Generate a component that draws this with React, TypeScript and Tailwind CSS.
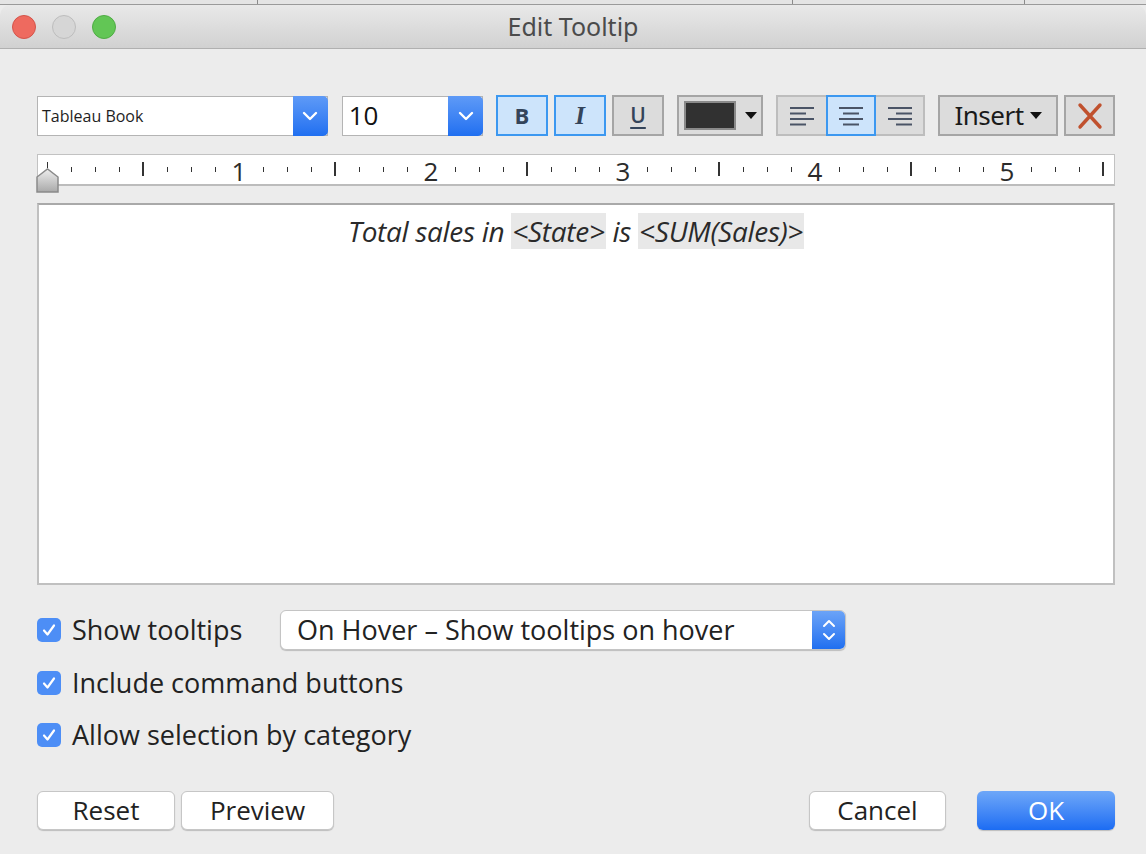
import React from "react";

const UI = { fontFamily: '"Open Sans", "Noto Sans", sans-serif' };

function Chevron() {
  return (
    <svg width="16" height="10" viewBox="0 0 16 10">
      <path d="M2 2 L8 8 L14 2" fill="none" stroke="white" strokeWidth="2.4" strokeLinecap="round" strokeLinejoin="round" />
    </svg>
  );
}

function Tri() {
  return (
    <svg width="12" height="8" viewBox="0 0 12 8">
      <path d="M0 0 H12 L6 7 Z" fill="#111" />
    </svg>
  );
}

function AlignIcon({ mode }: { mode: "l" | "c" | "r" }) {
  const rows = [24, 16, 24, 16];
  return (
    <svg width="24" height="20" viewBox="0 0 24 20">
      {rows.map((w, i) => {
        const x = mode === "l" ? 0 : mode === "r" ? 24 - w : (24 - w) / 2;
        return <rect key={i} x={x} y={1 + i * 5.5} width={w} height="2" fill="#4a5466" />;
      })}
    </svg>
  );
}

function Check() {
  return (
    <div className="w-[24px] h-[24px] rounded-[5px] bg-[#4d8ef6] flex items-center justify-center flex-none">
      <svg width="16" height="16" viewBox="0 0 16 16">
        <path d="M3 8.5 L6.5 12.5 L13 3.5" fill="none" stroke="white" strokeWidth="2.2" strokeLinecap="round" strokeLinejoin="round" />
      </svg>
    </div>
  );
}

function Ruler() {
  const cells = Array.from({ length: 45 }, (_, k) => k);
  return (
    <div className="relative h-[32px] bg-white border border-[#c2c2c2] border-b-2 border-b-[#bcbcbc] flex pl-[9px] mt-[18px]">
      {cells.map((k) => (
        <div key={k} className="w-[24px] flex-none h-full">
          <div className="w-0 h-full flex justify-center">
            {k % 8 === 0 && k > 0 ? (
              <span className="flex-none text-[26px] leading-none text-[#2b2b2b] mt-[3px]" style={UI}>
                {k / 8}
              </span>
            ) : k % 8 === 4 ? (
              <div className="w-[1.5px] h-[14px] bg-[#333] flex-none mt-[7px]" />
            ) : k === 0 ? (
              <div className="w-px h-[6px] bg-[#333] flex-none mt-[7px]" />
            ) : (
              <div className="w-px h-[5px] bg-[#333] flex-none mt-[12px]" />
            )}
          </div>
        </div>
      ))}
      <svg className="absolute left-[-2px] top-[13px]" width="23" height="25" viewBox="0 0 23 25">
        <defs>
          <linearGradient id="mk" x1="0" y1="0" x2="0" y2="1">
            <stop offset="0" stopColor="#eeeeee" />
            <stop offset="1" stopColor="#a9a9a9" />
          </linearGradient>
        </defs>
        <path d="M1 24 V9 L11.5 1 L22 9 V24 Z" fill="url(#mk)" stroke="#8a8a8a" strokeWidth="1.5" />
      </svg>
    </div>
  );
}

const toolBtn = "h-[41px] flex items-center justify-center border-2 flex-none";
const selBtn = "bg-[#cde4fb] border-[#3c98f0]";
const offBtn = "bg-[#dcdcdc] border-[#a5a5a5]";
const pushBtn =
  "h-[39px] bg-white rounded-[6px] border border-[#c6c6c6] shadow-[0_1px_1px_rgba(0,0,0,0.2)] text-[26px] text-[#222] flex items-center justify-center";

export default function App() {
  return (
    <div className="w-[1146px] h-[854px] bg-[#ececec] flex flex-col overflow-hidden" style={UI}>
      {/* strip of window behind */}
      <div className="h-[5px] bg-[#e4e4e4] border-b border-b-[#9a9a9a] flex flex-none">
        <div className="w-[258px] border-r border-r-[#8a8a8a]" />
        <div className="w-[535px] border-r border-r-[#8a8a8a]" />
        <div className="w-[232px] border-r border-r-[#8a8a8a]" />
      </div>
      {/* title bar */}
      <div className="h-[44px] flex-none rounded-tl-[10px] rounded-tr-[10px] bg-gradient-to-b from-[#e9e9e9] to-[#d1d1d1] border-b border-b-[#b0b0b0] flex items-center relative">
        <div className="flex gap-[16px] pl-[12px] items-center">
          <div className="w-[24px] h-[24px] rounded-full bg-[#ee6a5f] border border-[#d4544a]" />
          <div className="w-[24px] h-[24px] rounded-full bg-[#d6d6d6] border border-[#bdbdbd]" />
          <div className="w-[24px] h-[24px] rounded-full bg-[#62c655] border border-[#4fac44]" />
        </div>
        <div className="absolute inset-0 flex items-center justify-center text-[25px] text-[#4b4b4b]" style={{ fontFamily: '"Noto Sans", sans-serif' }}>
          Edit Tooltip
        </div>
      </div>

      <div className="flex flex-col pl-[37px] pr-[31px] flex-1">
        {/* toolbar */}
        <div className="flex items-center mt-[46px] h-[41px]">
          <div className="w-[292px] h-[40px] bg-white border border-[#b4b4b4] flex items-center">
            <span className="flex-1 pl-[4px] text-[16px] text-[#1e1e1e]">Tableau Book</span>
            <div className="w-[35px] h-[40px] -mr-px rounded-r-[5px] bg-gradient-to-b from-[#5e9af7] to-[#1f6ff0] flex items-center justify-center">
              <Chevron />
            </div>
          </div>
          <div className="ml-[14px] w-[142px] h-[40px] bg-white border border-[#b4b4b4] flex items-center">
            <span className="flex-1 pl-[6px] text-[26px] text-[#111]">10</span>
            <div className="w-[35px] h-[40px] -mr-px rounded-r-[5px] bg-gradient-to-b from-[#5e9af7] to-[#1f6ff0] flex items-center justify-center">
              <Chevron />
            </div>
          </div>
          <div className={`${toolBtn} ${selBtn} ml-[13px] w-[52px]`}>
            <span className="text-[22px] font-bold text-[#34445a]">B</span>
          </div>
          <div className={`${toolBtn} ${selBtn} ml-[6px] w-[52px]`}>
            <span className="text-[25px] italic font-bold text-[#34445a]" style={{ fontFamily: '"Liberation Serif", serif' }}>I</span>
          </div>
          <div className={`${toolBtn} ${offBtn} ml-[6px] w-[52px]`}>
            <span className="text-[21px] font-semibold underline underline-offset-4 decoration-2 text-[#34445a]">U</span>
          </div>
          <div className={`${toolBtn} ${offBtn} ml-[13px] w-[86px] justify-start pl-[5px] gap-[9px]`}>
            <div className="w-[52px] h-[29px] bg-[#313131] border-2 border-[#8a8a8a]" />
            <Tri />
          </div>
          <div className="ml-[13px] flex h-[41px] border-2 border-[#bdbdbd] bg-[#dcdcdc]">
            <div className="w-[48px] flex items-center justify-center">
              <AlignIcon mode="l" />
            </div>
            <div className="w-[50px] -my-[2px] flex items-center justify-center bg-[#cde4fb] border-2 border-[#3c98f0]">
              <AlignIcon mode="c" />
            </div>
            <div className="w-[47px] flex items-center justify-center">
              <AlignIcon mode="r" />
            </div>
          </div>
          <div className={`${toolBtn} ${offBtn} ml-[13px] w-[120px] gap-[6px]`}>
            <span className="text-[26px] text-[#1a1a1a]" style={{ fontFamily: '"Noto Sans", sans-serif', letterSpacing: "-0.5px" }}>Insert</span>
            <Tri />
          </div>
          <div className={`${toolBtn} ${offBtn} ml-[6px] w-[51px]`}>
            <svg width="26" height="28" viewBox="0 0 26 28">
              <path d="M3 3 L23 25 M23 3 L3 25" stroke="#c0512e" strokeWidth="3.4" strokeLinecap="round" />
            </svg>
          </div>
        </div>

        <Ruler />

        {/* editor */}
        <div className="mt-[17px] h-[382px] bg-white border-2 border-[#c0c0c0] border-t-[#a9a9a9] flex justify-center">
          <div className="mt-[8px] h-[36px] flex items-center italic text-[28px] text-[#2a2a2a]" style={{ fontFamily: '"Open Sans", sans-serif', letterSpacing: "-0.3px" }}>
            <span>Total sales in&nbsp;</span>
            <span className="bg-[#e8e8e8] h-[36px] flex items-center px-[1px]">&lt;State&gt;</span>
            <span>&nbsp;is&nbsp;</span>
            <span className="bg-[#e8e8e8] h-[36px] flex items-center px-[1px]">&lt;SUM(Sales)&gt;</span>
          </div>
        </div>

        {/* options */}
        <div className="mt-[25px] flex items-center h-[40px]">
          <Check />
          <span className="ml-[11px] text-[27px] text-[#222] w-[208px]">Show tooltips</span>
          <div className="w-[566px] h-[40px] bg-white rounded-[6px] border border-[#c4c4c4] shadow-[0_1px_1px_rgba(0,0,0,0.2)] flex items-center overflow-hidden">
            <span className="flex-1 pl-[16px] text-[27px] text-[#222]">On Hover – Show tooltips on hover</span>
            <div className="w-[33px] h-full bg-gradient-to-b from-[#6ba3f7] to-[#1f6ff0] flex flex-col items-center justify-center gap-[4px]">
              <svg width="14" height="9" viewBox="0 0 14 9">
                <path d="M2 7 L7 2 L12 7" fill="none" stroke="white" strokeWidth="2" strokeLinecap="round" strokeLinejoin="round" />
              </svg>
              <svg width="14" height="9" viewBox="0 0 14 9">
                <path d="M2 2 L7 7 L12 2" fill="none" stroke="white" strokeWidth="2" strokeLinecap="round" strokeLinejoin="round" />
              </svg>
            </div>
          </div>
        </div>
        <div className="mt-[13px] flex items-center h-[40px]">
          <Check />
          <span className="ml-[11px] text-[27px] text-[#222]">Include command buttons</span>
        </div>
        <div className="mt-[12px] flex items-center h-[40px]">
          <Check />
          <span className="ml-[11px] text-[27px] text-[#222]">Allow selection by category</span>
        </div>

        {/* buttons */}
        <div className="mt-[36px] flex items-center">
          <button className={`${pushBtn} w-[138px]`}>Reset</button>
          <button className={`${pushBtn} ml-[6px] w-[153px]`}>Preview</button>
          <div className="flex-1" />
          <button className={`${pushBtn} w-[137px]`}>Cancel</button>
          <button className="ml-[31px] w-[138px] h-[39px] rounded-[6px] bg-gradient-to-b from-[#6ea7f8] to-[#1b6cf3] shadow-[0_1px_1px_rgba(0,0,0,0.2)] text-[26px] text-white flex items-center justify-center">
            OK
          </button>
        </div>
      </div>
    </div>
  );
}
